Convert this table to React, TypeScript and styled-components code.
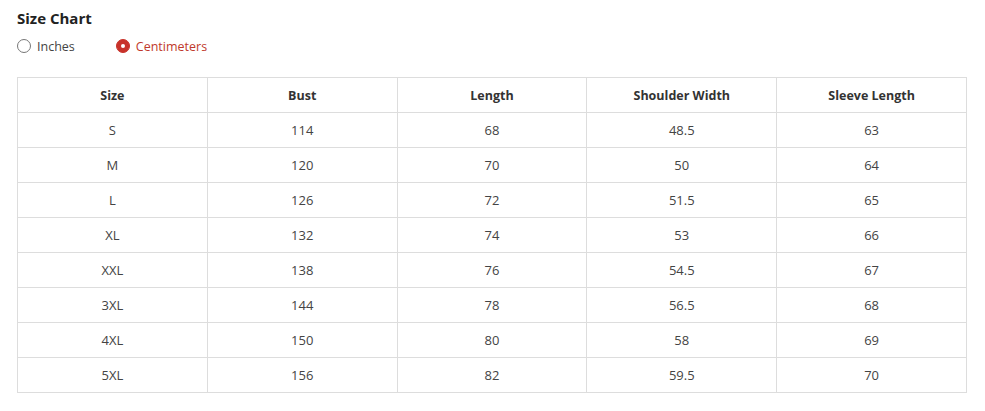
import { createGlobalStyle } from 'styled-components';
import styled from 'styled-components';

const GlobalStyle = createGlobalStyle`
  body {
    margin: 0;
    background: #fff;
    font-family: 'Open Sans', 'Noto Sans', sans-serif;
    color: #333;
  }
`;

const Page = styled.div`
  padding: 8px 17px 0 17px;
`;

const Title = styled.h3`
  margin: 0;
  font-size: 15px;
  font-weight: 700;
  line-height: 20px;
  color: #222;
`;

const UnitRow = styled.div`
  display: flex;
  gap: 41px;
  margin-top: 9px;
  height: 18px;
  align-items: center;
`;

const Unit = styled.label<{ $active?: boolean }>`
  display: flex;
  align-items: center;
  gap: 6px;
  font-size: 12.5px;
  color: ${(p) => (p.$active ? '#c0392b' : '#444')};
  cursor: pointer;
`;

const Dot = styled.span<{ $active?: boolean }>`
  box-sizing: border-box;
  width: 14px;
  height: 14px;
  border-radius: 50%;
  border: 1px solid ${(p) => (p.$active ? '#c8322a' : '#777')};
  background: ${(p) => (p.$active ? '#c8322a' : '#fff')};
  display: flex;
  align-items: center;
  justify-content: center;

  &::after {
    content: '';
    width: 4px;
    height: 4px;
    border-radius: 50%;
    background: ${(p) => (p.$active ? '#fff' : 'transparent')};
  }
`;

const Table = styled.table`
  margin-top: 22px;
  width: 950px;
  border-collapse: collapse;
  table-layout: fixed;
`;

const Th = styled.th`
  height: 34px;
  padding: 0;
  border: 1px solid #ddd;
  font-size: 12.5px;
  font-weight: 700;
  color: #333;
  text-align: center;
`;

const Td = styled.td`
  height: 34px;
  padding: 0;
  border: 1px solid #ddd;
  font-size: 13px;
  color: #444;
  text-align: center;
`;

const headers = ['Size', 'Bust', 'Length', 'Shoulder Width', 'Sleeve Length'];

const rows: (string | number)[][] = [
  ['S', 114, 68, 48.5, 63],
  ['M', 120, 70, 50, 64],
  ['L', 126, 72, 51.5, 65],
  ['XL', 132, 74, 53, 66],
  ['XXL', 138, 76, 54.5, 67],
  ['3XL', 144, 78, 56.5, 68],
  ['4XL', 150, 80, 58, 69],
  ['5XL', 156, 82, 59.5, 70],
];

const App = () => (
  <>
    <GlobalStyle />
    <Page>
      <Title>Size Chart</Title>
      <UnitRow>
        <Unit>
          <Dot />
          Inches
        </Unit>
        <Unit $active>
          <Dot $active />
          Centimeters
        </Unit>
      </UnitRow>
      <Table>
        <thead>
          <tr>
            {headers.map((h) => (
              <Th key={h}>{h}</Th>
            ))}
          </tr>
        </thead>
        <tbody>
          {rows.map((r) => (
            <tr key={r[0]}>
              {r.map((c, i) => (
                <Td key={i}>{c}</Td>
              ))}
            </tr>
          ))}
        </tbody>
      </Table>
    </Page>
  </>
);

export default App;
